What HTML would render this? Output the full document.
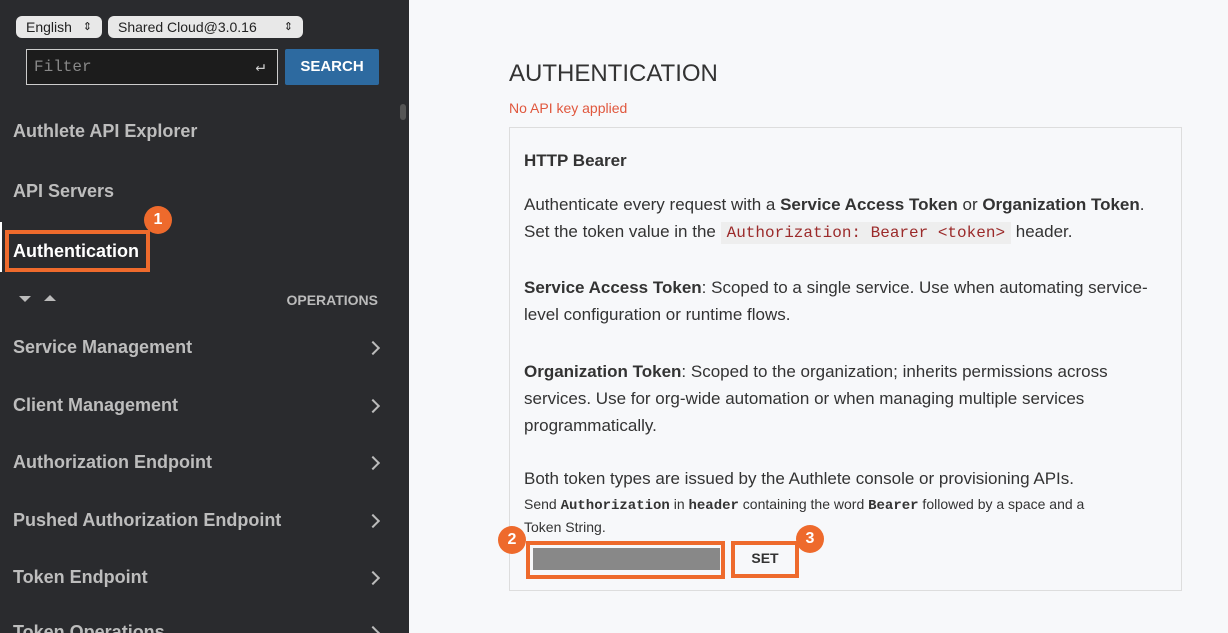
<!DOCTYPE html>
<html style="overflow:hidden"><head><style>
html,body{margin:0;width:1228px;height:633px;overflow:hidden}
body{background:#f7f8fa;font-family:"Liberation Sans",sans-serif;position:relative}
.side{position:absolute;left:0;top:0;width:409px;height:633px;background:#2a2b2e;color:#c8c8c8;overflow:hidden}
.sel{position:absolute;top:16px;height:22px;background:#e8e8e8;border-radius:6px;color:#222;font-size:14px;line-height:22px;padding-left:10px;box-sizing:border-box}
.sel:after{content:"⇕";position:absolute;right:10px;top:0;font-size:11px}
.item{position:absolute;left:13px;font-weight:bold;font-size:18px;color:#bdbdbd;white-space:nowrap}
.chev{position:absolute;right:31px;width:8px;height:8px;border-right:2px solid #bbb;border-top:2px solid #bbb;transform:rotate(45deg)}
.badge{position:absolute;width:28px;height:28px;border-radius:50%;background:#ee6a2c;color:#fff;font-weight:bold;font-size:16px;text-align:center;line-height:28px}
.box{position:absolute;border:4px solid #ee6a2c;box-sizing:border-box}
.t{position:absolute;left:524px;font-size:17px;color:#333}
code{font-family:"Liberation Mono",monospace}
</style></head><body>
<div class="side">
<div class="sel" style="left:16px;width:86px">English</div>
<div class="sel" style="left:108px;width:195px">Shared Cloud@3.0.16</div>
<div style="position:absolute;left:26px;top:49px;width:252px;height:36px;border:1px solid #ccc;background:#1c1c1c;box-sizing:border-box;font-family:'Liberation Mono',monospace;color:#888;font-size:16px;line-height:34px;padding-left:7px">Filter<span style="position:absolute;right:12px;color:#ccc">↵</span></div>
<div style="position:absolute;left:285px;top:49px;width:94px;height:36px;background:#2d6aa0;color:#fff;font-weight:bold;font-size:15px;text-align:center;line-height:36px;border-radius:2px">SEARCH</div>
<div style="position:absolute;left:400px;top:104px;width:6px;height:16px;background:#555;border-radius:3px"></div>
<div class="item" style="top:121px">Authlete API Explorer</div>
<div class="item" style="top:181px">API Servers</div>
<div style="position:absolute;left:0;top:222px;width:2px;height:50px;background:#fff"></div>
<div class="item" style="top:241px;color:#fff">Authentication</div>
<div class="box" style="left:5px;top:230px;width:145px;height:42px"></div>
<div class="badge" style="left:144px;top:206px">1</div>
<div style="position:absolute;left:19px;top:296px;width:0;height:0;border-left:6px solid transparent;border-right:6px solid transparent;border-top:6px solid #bbb"></div>
<div style="position:absolute;left:44px;top:295px;width:0;height:0;border-left:6px solid transparent;border-right:6px solid transparent;border-bottom:6px solid #bbb"></div>
<div style="position:absolute;right:31px;top:292px;font-weight:bold;font-size:14px;color:#bbb">OPERATIONS</div>
<div class="item" style="top:337px">Service Management</div><div class="chev" style="top:343px"></div>
<div class="item" style="top:395px">Client Management</div><div class="chev" style="top:401px"></div>
<div class="item" style="top:452px">Authorization Endpoint</div><div class="chev" style="top:458px"></div>
<div class="item" style="top:510px">Pushed Authorization Endpoint</div><div class="chev" style="top:516px"></div>
<div class="item" style="top:567px">Token Endpoint</div><div class="chev" style="top:573px"></div>
<div class="item" style="top:622px">Token Operations</div><div class="chev" style="top:628px"></div>
</div>
<div style="position:absolute;left:509px;top:60px;font-size:24px;color:#333">AUTHENTICATION</div>
<div style="position:absolute;left:509px;top:100px;font-size:14px;color:#e0573d">No API key applied</div>
<div style="position:absolute;left:509px;top:127px;width:673px;height:464px;border:1px solid #ddd;box-sizing:border-box;background:#f7f8fa"></div>
<div class="t" style="top:151px;font-weight:bold">HTTP Bearer</div>
<div class="t" style="top:191px;line-height:27px;width:650px">Authenticate every request with a <b>Service Access Token</b> or <b>Organization Token</b>. Set the token value in the <code style="background:#eee;color:#9b2a2a;padding:2px 6px;font-size:16px">Authorization: Bearer &lt;token&gt;</code> header.</div>
<div class="t" style="top:274px;line-height:27px;width:650px"><b>Service Access Token</b>: Scoped to a single service. Use when automating service-level configuration or runtime flows.</div>
<div class="t" style="top:358px;line-height:27px;width:650px"><b>Organization Token</b>: Scoped to the organization; inherits permissions across services. Use for org-wide automation or when managing multiple services programmatically.</div>
<div class="t" style="top:469px">Both token types are issued by the Authlete console or provisioning APIs.</div>
<div class="t" style="top:494px;font-size:14px;line-height:21px;width:600px">Send <code><b>Authorization</b></code> in <code><b>header</b></code> containing the word <code><b>Bearer</b></code> followed by a space and a Token String.</div>
<div class="box" style="left:526px;top:541px;width:199px;height:38px"></div>
<div style="position:absolute;left:533px;top:548px;width:187px;height:22px;background:#888"></div>
<div class="box" style="left:731px;top:541px;width:68px;height:37px"></div>
<div style="position:absolute;left:731px;top:550px;width:68px;text-align:center;font-weight:bold;font-size:14px;color:#333">SET</div>
<div class="badge" style="left:498px;top:526px">2</div>
<div class="badge" style="left:796px;top:525px">3</div>
</body></html>
